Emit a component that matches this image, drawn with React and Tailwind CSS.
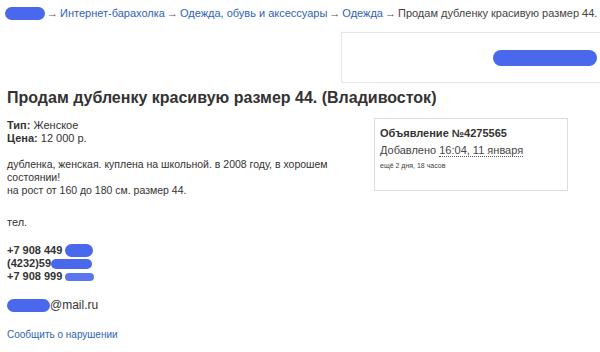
import React from 'react';

const Blob = ({ className = '' }) => (
    <span className={`inline-block rounded-full bg-[#4a68ec] align-middle ${className}`}></span>
);

const Crumb = ({ children }) => (
    <span className="text-[#2f62b8]">{children}</span>
);

const Arrow = () => <span className="mx-[2px] text-[#555]">→</span>;

export default function App() {
    return (
        <div className="w-[600px] h-[352px] overflow-hidden bg-white text-[#333] font-['Liberation_Sans',Arial,sans-serif]">
            {/* breadcrumbs */}
            <div className="flex items-center h-[26px] pl-[5px] text-[11px] whitespace-nowrap">
                <Blob className="w-[40px] h-[13px]" />
                <Arrow />
                <Crumb>Интернет-барахолка</Crumb>
                <Arrow />
                <Crumb>Одежда, обувь и аксессуары</Crumb>
                <Arrow />
                <Crumb>Одежда</Crumb>
                <Arrow />
                <span className="text-[#444]">Продам дубленку красивую размер 44.</span>
            </div>

            {/* banner slot */}
            <div className="flex justify-end mt-[6px]">
                <div className="w-[259px] h-[51px] border border-[#e6e6e6] border-r-0 flex items-center justify-end pr-[3px]">
                    <Blob className="w-[104px] h-[16px]" />
                </div>
            </div>

            <h1 className="mt-[5px] pl-[7px] text-[16px] leading-[20px] font-bold text-[#333]">
                Продам дубленку красивую размер 44. (Владивосток)
            </h1>

            <div className="flex mt-[10px]">
                <div className="w-[374px] pl-[7px] text-[11px] leading-[13px]">
                    <div className="pt-[1px]"><b>Тип:</b> Женское</div>
                    <div><b>Цена:</b> 12 000 р.</div>

                    <div className="mt-[13px] text-[10.5px]">
                        дубленка, женская. куплена на школьной. в 2008 году, в хорошем
                        <br />состоянии!
                        <br />на рост от 160 до 180 см. размер 44.
                    </div>

                    <div className="mt-[19px]">тел.</div>

                    <div className="mt-[15px] font-bold">
                        <div className="flex items-center h-[13px]">+7 908 449 <Blob className="ml-[3px] w-[28px] h-[13px]" /></div>
                        <div className="flex items-center h-[13px]">(4232)59<Blob className="w-[41px] h-[10px]" /></div>
                        <div className="flex items-center h-[13px]">+7 908 999 <Blob className="ml-[3px] w-[29px] h-[8px] bg-[#5a76ee]" /></div>
                    </div>

                    <div className="flex items-center mt-[16px] text-[12px]">
                        <Blob className="w-[43px] h-[13px]" />
                        <span>@mail.ru</span>
                    </div>

                    <div className="mt-[16px] text-[10px] text-[#2f62b8]">Сообщить о нарушении</div>
                </div>

                <div className="w-[194px] h-[73px] border border-[#dcdcdc] px-[5px] pt-[7px]">
                    <div className="text-[11px] leading-[14px] font-bold text-[#333]">Объявление №4275565</div>
                    <div className="text-[11px] leading-[16px] mt-[2px] text-[#444]">
                        Добавлено <span className="border-b border-dotted border-[#555]">16:04, 11 января</span>
                    </div>
                    <div className="text-[7px] leading-[12px] mt-[2px] text-[#444]">ещё 2 дня, 18 часов</div>
                </div>
            </div>
        </div>
    );
}
